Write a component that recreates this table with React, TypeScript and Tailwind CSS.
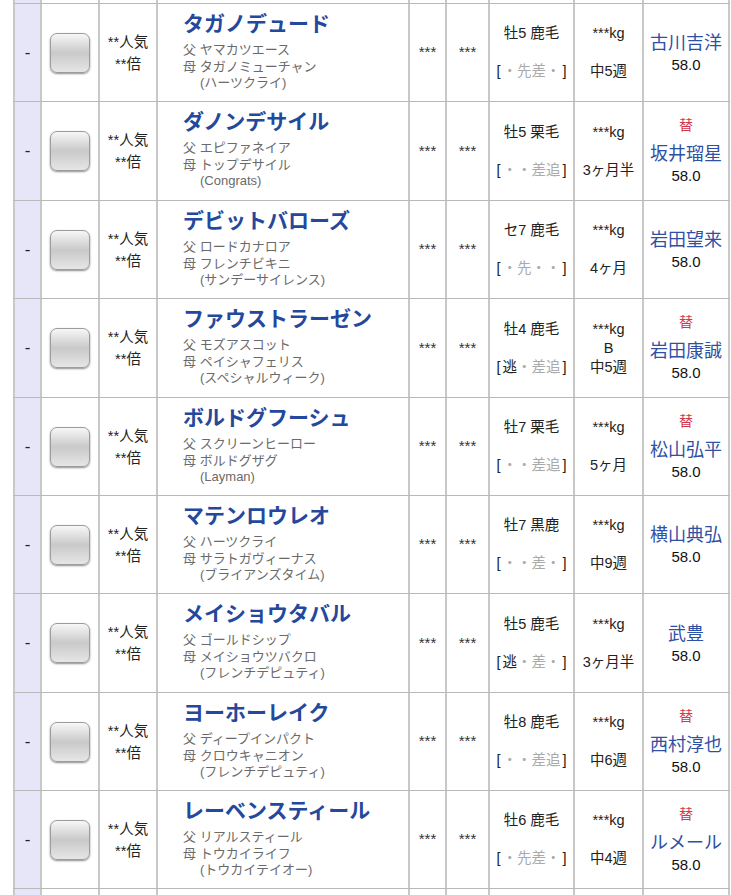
type Horse = {
  name: string;
  sire: string;
  dam: string;
  bms: string;
  sex: string;
  style: string[];
  blinker?: boolean;
  interval: string;
  jockey: string;
  change?: boolean;
  h: string;
};

const horses: Horse[] = [
  { name: "タガノデュード", sire: "ヤマカツエース", dam: "タガノミューチャン", bms: "ハーツクライ", sex: "牡5 鹿毛", style: ["・", "先", "差", "・"], interval: "中5週", jockey: "古川吉洋", h: "h-[98px]" },
  { name: "ダノンデサイル", sire: "エピファネイア", dam: "トップデサイル", bms: "Congrats", sex: "牡5 栗毛", style: ["・", "・", "差", "追"], interval: "3ヶ月半", jockey: "坂井瑠星", change: true, h: "h-[99px]" },
  { name: "デビットバローズ", sire: "ロードカナロア", dam: "フレンチビキニ", bms: "サンデーサイレンス", sex: "セ7 鹿毛", style: ["・", "先", "・", "・"], interval: "4ヶ月", jockey: "岩田望来", h: "h-[98px]" },
  { name: "ファウストラーゼン", sire: "モズアスコット", dam: "ペイシャフェリス", bms: "スペシャルウィーク", sex: "牡4 鹿毛", style: ["逃", "・", "差", "追"], blinker: true, interval: "中5週", jockey: "岩田康誠", change: true, h: "h-[99px]" },
  { name: "ボルドグフーシュ", sire: "スクリーンヒーロー", dam: "ボルドグザグ", bms: "Layman", sex: "牡7 栗毛", style: ["・", "・", "差", "追"], interval: "5ヶ月", jockey: "松山弘平", change: true, h: "h-[98px]" },
  { name: "マテンロウレオ", sire: "ハーツクライ", dam: "サラトガヴィーナス", bms: "ブライアンズタイム", sex: "牡7 黒鹿", style: ["・", "・", "差", "・"], interval: "中9週", jockey: "横山典弘", h: "h-[98px]" },
  { name: "メイショウタバル", sire: "ゴールドシップ", dam: "メイショウツバクロ", bms: "フレンチデピュティ", sex: "牡5 鹿毛", style: ["逃", "・", "差", "・"], interval: "3ヶ月半", jockey: "武豊", h: "h-[99px]" },
  { name: "ヨーホーレイク", sire: "ディープインパクト", dam: "クロウキャニオン", bms: "フレンチデピュティ", sex: "牡8 鹿毛", style: ["・", "・", "差", "追"], interval: "中6週", jockey: "西村淳也", change: true, h: "h-[98px]" },
  { name: "レーベンスティール", sire: "リアルスティール", dam: "トウカイライフ", bms: "トウカイテイオー", sex: "牡6 鹿毛", style: ["・", "先", "差", "・"], interval: "中4週", jockey: "ルメール", change: true, h: "h-[98px]" },
];

const cell = "border-l-2 border-[#c8c8c8] shrink-0";

const EmptyRow = ({ h, last }: { h: string; last?: boolean }) => (
  <div className={`flex ${h} ${last ? "" : "border-b border-[#b9b9b9]"}`}>
    <div className={`${cell} w-[27px] bg-[#e6e6f8]`} />
    <div className={`${cell} w-[58px]`} />
    <div className={`${cell} w-[58px]`} />
    <div className={`${cell} w-[252px]`} />
    <div className={`${cell} w-[37px]`} />
    <div className={`${cell} w-[43px]`} />
    <div className={`${cell} w-[85px]`} />
    <div className={`${cell} w-[69px]`} />
    <div className={`${cell} w-[88px] border-r-2`} />
  </div>
);

const Row = ({ r }: { r: Horse }) => (
  <div className={`flex ${r.h} border-b border-[#b9b9b9]`}>
    <div className={`${cell} w-[27px] bg-[#e6e6f8] flex items-center justify-center text-[17px] text-[#222]`}>-</div>
    <div className={`${cell} w-[58px] flex items-center justify-center`}>
      <div className="w-10 h-10 rounded-[7px] border border-[#9c9c9c] bg-linear-to-b from-[#f7f7f7] via-[#c9c9c9] to-[#e6e6e6] shadow-[0_1px_2px_rgba(0,0,0,0.45)]" />
    </div>
    <div className={`${cell} w-[58px] flex flex-col items-center justify-center text-[14.5px] leading-[22px] text-[#222]`}>
      <div>**人気</div>
      <div>**倍</div>
    </div>
    <div className={`${cell} w-[252px] pl-[25px] pt-[6px]`}>
      <div className="text-[21px] leading-[28px] font-bold text-[#24489c] whitespace-nowrap">{r.name}</div>
      <div className="mt-[4px] text-[13px] leading-[16.5px] text-[#6a6a6a] whitespace-nowrap">
        <div>父 {r.sire}</div>
        <div>母 {r.dam}</div>
        <div className="pl-[17px]">({r.bms})</div>
      </div>
    </div>
    <div className={`${cell} w-[37px] flex items-center justify-center text-[15px] text-[#333]`}>***</div>
    <div className={`${cell} w-[43px] flex items-center justify-center text-[15px] text-[#333]`}>***</div>
    <div className={`${cell} w-[85px] flex flex-col items-center justify-center text-[14.5px] leading-[19px] text-[#222] whitespace-nowrap`}>
      <div>{r.sex}</div>
      <div>&nbsp;</div>
      <div className="flex items-center">
        <span className="mr-[2px]">[</span>
        {r.style.map((s, i) => (
          <span key={i} className={s === "逃" ? "text-[#222]" : "text-[#aaa]"}>
            {s}
          </span>
        ))}
        <span className="ml-[2px]">]</span>
      </div>
    </div>
    <div className={`${cell} w-[69px] flex flex-col items-center justify-center text-[14.5px] leading-[19px] text-[#222] whitespace-nowrap`}>
      <div>***kg</div>
      <div>{r.blinker ? "B" : "\u00a0"}</div>
      <div>{r.interval}</div>
    </div>
    <div className={`${cell} w-[88px] border-r-2 flex flex-col items-center justify-center pt-[3px] whitespace-nowrap`}>
      {r.change && <div className="text-[14px] leading-[14px] mb-[11px] text-[#d3384a]">替</div>}
      <div className="text-[18px] leading-[22px] text-[#2f50a4]">{r.jockey}</div>
      <div className="text-[15px] leading-[22px] text-[#111]">58.0</div>
    </div>
  </div>
);

export default function App() {
  return (
    <div className="w-[731px] h-[895px] overflow-hidden bg-white font-['Liberation_Sans','Noto_Sans_CJK_JP',sans-serif]">
      <div className="ml-[13px] w-[717px]">
        <EmptyRow h="h-[4px]" />
        {horses.map((r) => (
          <Row key={r.name} r={r} />
        ))}
        <EmptyRow h="h-[10px]" last />
      </div>
    </div>
  );
}
